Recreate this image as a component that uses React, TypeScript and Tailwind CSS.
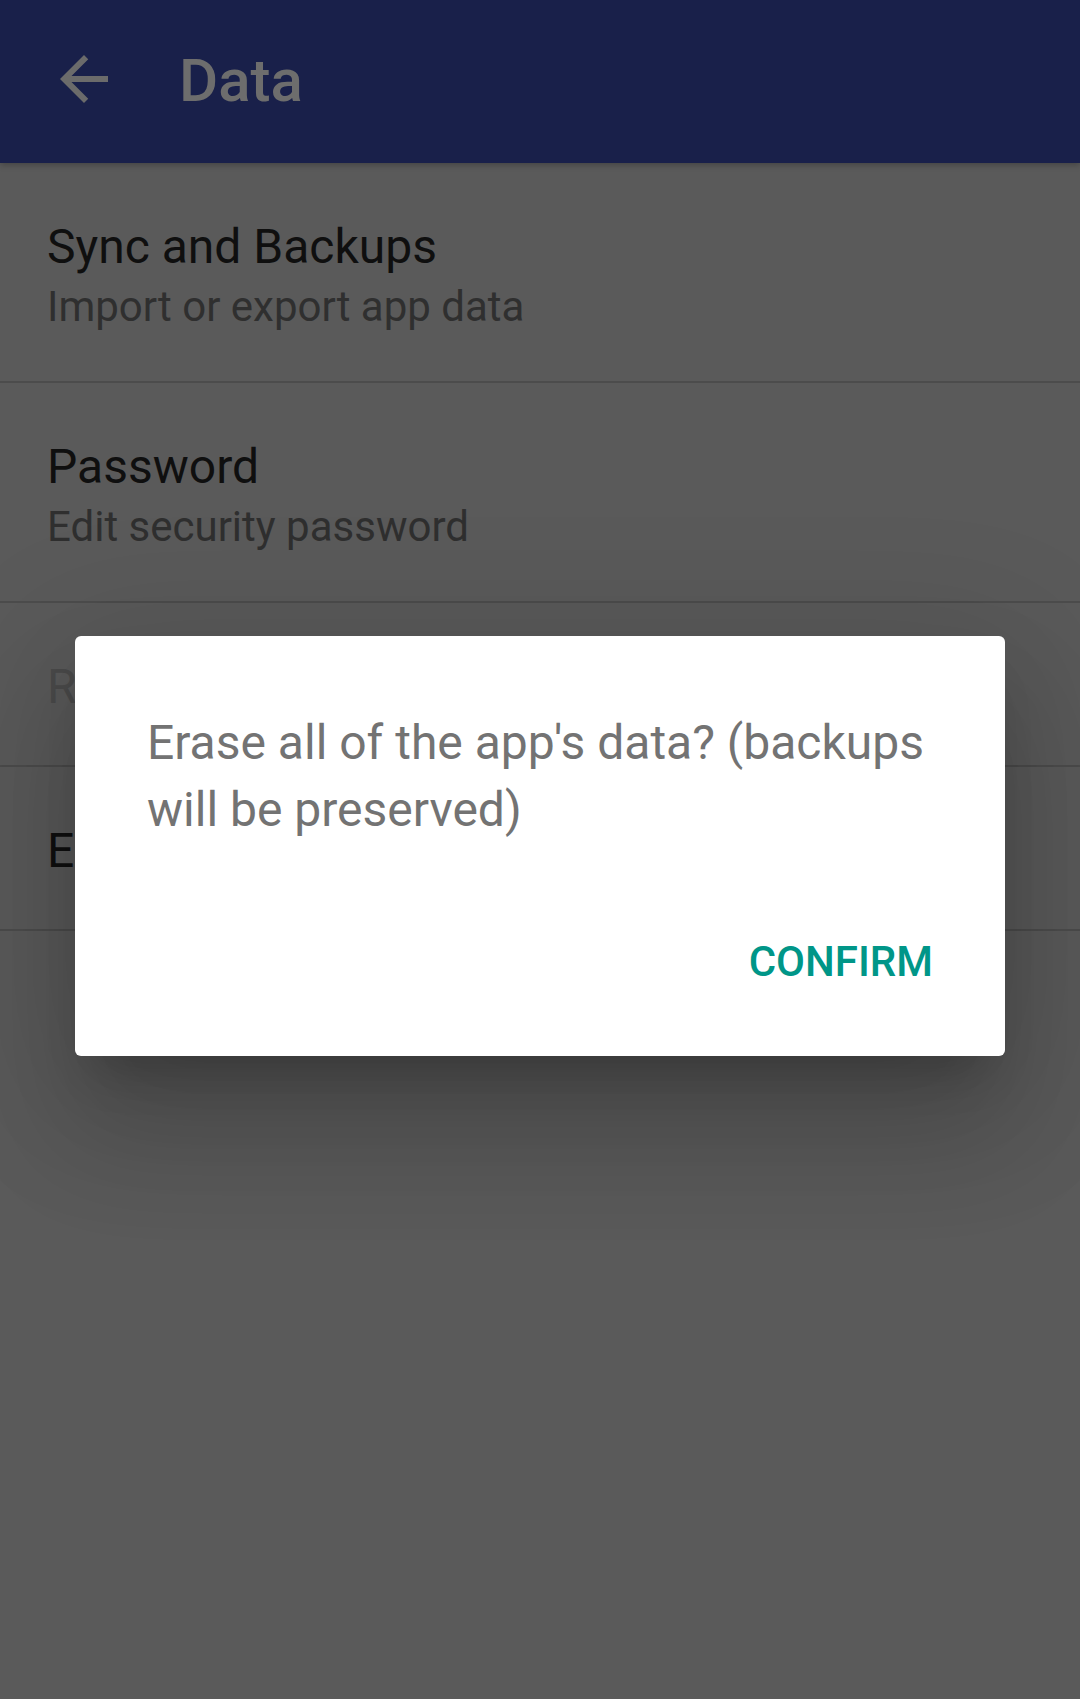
import React from "react";

function Row({ title, subtitle, titleColor = "text-[#0f0f0f]" }: { title: string; subtitle?: string; titleColor?: string }) {
  if (subtitle) {
    return (
      <div className="h-[220px] border-b-2 border-[#4c4c4c] pl-[47px] pt-[56px]">
        <div className={`text-[48px] leading-[56px] ${titleColor}`}>{title}</div>
        <div className="text-[42px] leading-[64px] text-[#2f2f2f]">{subtitle}</div>
      </div>
    );
  }
  return (
    <div className="h-[164px] border-b-2 border-[#4c4c4c] pl-[47px] pt-[56px]">
      <div className={`text-[48px] leading-[56px] ${titleColor}`}>{title}</div>
    </div>
  );
}

export default function App() {
  return (
    <div className="relative w-[1080px] h-[1699px] overflow-hidden bg-[#5a5a5a] font-['Roboto',sans-serif]">
      <header className="relative z-10 h-[163px] bg-[#19204a] flex items-start shadow-[0_2px_6px_rgba(0,0,0,0.25)]">
        <svg viewBox="0 0 24 24" className="ml-[48px] mt-[43px] w-[72px] h-[72px] shrink-0" fill="#6b6b6b">
          <path d="M20 11H7.83l5.59-5.59L12 4l-8 8 8 8 1.41-1.41L7.83 13H20v-2z" />
        </svg>
        <h1 className="ml-[59px] mt-[51px] text-[60px] leading-[60px] font-medium text-[#6d6d6d]">Data</h1>
      </header>

      <div className="flex flex-col">
        <Row title="Sync and Backups" subtitle="Import or export app data" />
        <Row title="Password" subtitle="Edit security password" />
        <Row title="Restore data" titleColor="text-[#4b4b4b]" />
        <Row title="Erase data" />
      </div>

      <div className="absolute inset-0 z-20 flex items-center justify-center pb-[7px]">
        <div className="w-[930px] rounded-[6px] bg-white pt-[73px] px-[72px] pb-[70px] shadow-[0_33px_45px_-21px_rgba(0,0,0,0.2),0_72px_114px_9px_rgba(0,0,0,0.14),0_27px_138px_24px_rgba(0,0,0,0.12)]">
          <p className="text-[48px] leading-[67px] text-[#737373]">
            Erase all of the app's data? (backups will be preserved)
          </p>
          <div className="mt-[95px] flex justify-end">
            <span className="text-[42px] leading-[48px] font-medium text-[#009688]">CONFIRM</span>
          </div>
        </div>
      </div>
    </div>
  );
}
